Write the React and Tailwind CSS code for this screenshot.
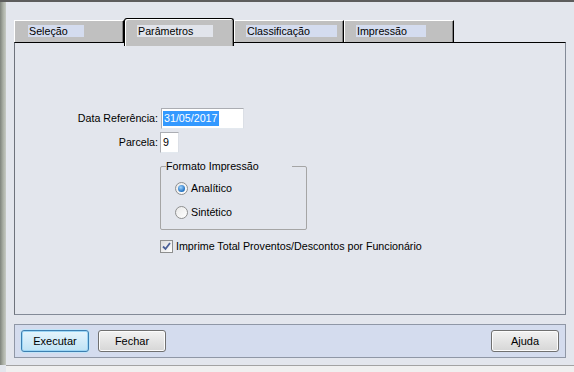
import React from 'react';

const tabs = [
  { id: 'selecao', label: 'Seleção', box: 'w-[56px] ml-[13px]' },
  { id: 'parametros', label: 'Parâmetros', box: 'w-[76px] ml-[12px]' },
  { id: 'classificacao', label: 'Classificação', box: 'w-[91px] ml-[11px]' },
  { id: 'impressao', label: 'Impressão', box: 'w-[70px] ml-[11px]' },
];

const Tab = ({ tab, active }) => {
  if (active) {
    return (
      <div className="relative z-10 w-[110px] h-[28px] bg-[#c0c0c0] border border-black border-b-0 rounded-t-[3px] shadow-[inset_1px_1px_0_#ffffff,inset_-1px_0_0_#808080] pt-[6px]">
        <div className={`${tab.box} h-[12px] bg-[#e1e4eb] leading-[12px] pl-[1px]`}>{tab.label}</div>
      </div>
    );
  }
  return (
    <div className="mt-[2px] w-[110px] h-[22px] bg-[#c0c0c0] border-t border-l border-t-white border-l-white border-r border-r-black shadow-[inset_-1px_0_0_#808080] pt-[4px]">
      <div className={`${tab.box} h-[12px] bg-[#d4dcef] leading-[12px] pl-[1px]`}>{tab.label}</div>
    </div>
  );
};

const Radio = ({ checked, label }) => (
  <div className="flex items-center h-[13px] gap-[3px]">
    <div className="w-[13px] h-[13px] rounded-full border border-[#8e8f8f] bg-gradient-to-br from-[#e9e9e9] to-[#ffffff] flex items-center justify-center">
      {checked && (
        <div className="w-[7px] h-[7px] rounded-full bg-[radial-gradient(circle_at_40%_35%,#9fd4ff,#1f6fc0_70%,#0d4d8f)]" />
      )}
    </div>
    <span>{label}</span>
  </div>
);

const Button = ({ label, primary }) => (
  <button
    className={`h-[22px] w-[68px] rounded-[3px] border text-[11px] leading-[20px] ${
      primary
        ? 'border-[#3c7fb1] bg-gradient-to-b from-[#e5f5fd] to-[#bfe3f5] shadow-[0_0_0_1px_#c1e4f8,inset_0_0_0_1px_#9cd6f5]'
        : 'border-[#707070] bg-gradient-to-b from-[#f2f2f2] to-[#d6d6d6] shadow-[inset_0_0_0_1px_#fcfcfc]'
    }`}
  >
    {label}
  </button>
);

export default function App() {
  return (
    <div className="w-[574px] h-[372px] bg-[#e3e6ed] flex flex-col overflow-hidden text-[10.7px] text-black font-['Liberation_Sans',Arial,sans-serif]">
      <div className="h-[2px] bg-[#5d5d5d]" />
      <div className="flex flex-1">
        <div className="w-[6px] bg-gradient-to-r from-[#7f847c] via-[#a9aea4] to-[#c7cbc4]" />
        <div className="flex-1 flex flex-col pl-[8px] pr-[2px]">
          <div className="mt-[16px] h-[24px] flex items-start">
            {tabs.map((t) => (
              <Tab key={t.id} tab={t} active={t.id === 'parametros'} />
            ))}
          </div>

          <div className="w-[552px] h-[273px] border border-[#838a97] border-t-black border-l-[#6e737c] flex flex-col">
            <div className="mt-[65px] flex items-center h-[21px]">
              <span className="w-[146px] text-right pr-[3px]">Data Referência:</span>
              <div className="w-[83px] h-[21px] bg-white border border-[#abadb3] border-r-[#dbdfe6] border-b-[#e3e9ef] flex items-center pl-[1px]">
                <span className="bg-[#3399ff] text-white px-[1px] leading-[15px]">31/05/2017</span>
              </div>
            </div>
            <div className="mt-[3px] flex items-center h-[21px]">
              <span className="w-[145px] text-right pr-[2px]">Parcela:</span>
              <div className="w-[19px] h-[21px] bg-white border border-[#abadb3] border-r-[#dbdfe6] border-b-[#e3e9ef] flex items-center pl-[2px]">
                9
              </div>
            </div>

            <fieldset className="mt-[7px] ml-[145px] w-[147px] h-[70px] border border-[#a5a5a5] rounded-[2px] pl-[5px] pr-0 pb-0 pt-0">
              <legend className="pl-0 pr-[33px] leading-[13px]">Formato Impressão</legend>
              <div className="ml-[9px] mt-[9px] flex flex-col gap-[11px]">
                <Radio checked label="Analítico" />
                <Radio label="Sintético" />
              </div>
            </fieldset>

            <div className="mt-[8px] ml-[145px] flex items-center gap-[3px]">
              <div className="w-[13px] h-[13px] border border-[#8e8f8f] bg-gradient-to-br from-[#dcdcdc] to-[#ffffff] flex items-center justify-center">
                <svg width="9" height="9" viewBox="0 0 9 9">
                  <path d="M1 4.5 L3.5 7 L8 1" fill="none" stroke="#4a5f97" strokeWidth="1.8" />
                </svg>
              </div>
              <span>Imprime Total Proventos/Descontos por Funcionário</span>
            </div>
          </div>

          <div className="mt-[9px] w-[552px] h-[34px] bg-[#d4dcee] border border-[#8f97a6] flex items-center px-[6px]">
            <Button label="Executar" primary />
            <div className="ml-[9px]">
              <Button label="Fechar" />
            </div>
            <div className="ml-auto">
              <Button label="Ajuda" />
            </div>
          </div>

          <div className="flex-1" />
        </div>
      </div>
      <div className="h-[7px] bg-[#f0f0f0] border-t border-[#a3a3a3] ml-[6px]" />
    </div>
  );
}
